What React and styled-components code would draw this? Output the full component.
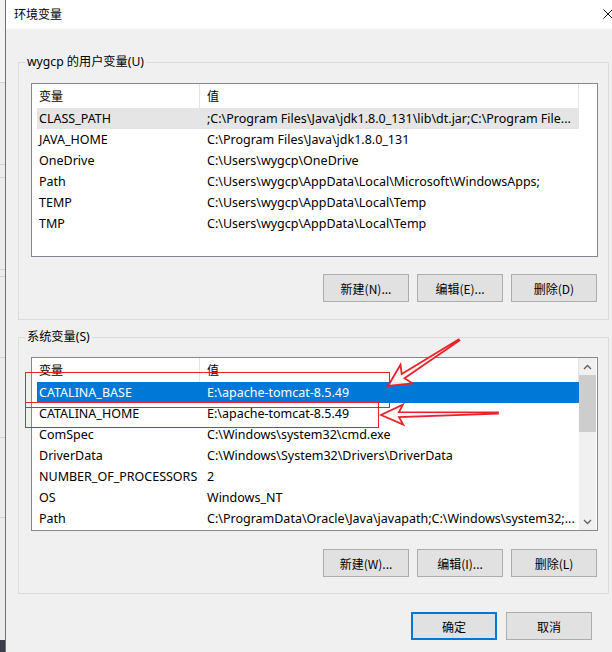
import React from 'react';
import styled, { createGlobalStyle } from 'styled-components';

const Global = createGlobalStyle`
  html, body { margin: 0; padding: 0; background: #f0f0f0; }
  body {
    font-family: "Segoe UI", "Noto Sans", "Noto Sans CJK SC", sans-serif;
    font-size: 12px;
    color: #000;
  }
  * { box-sizing: border-box; }
`;

const Screen = styled.div`
  position: relative;
  width: 612px;
  height: 652px;
  overflow: hidden;
  display: flex;
`;

const BackStrip = styled.div`
  flex: none;
  width: 5px;
  display: flex;
  flex-direction: column;
  background: #ececec;
`;

const BackSeg = styled.div`
  flex: ${(p) => (p.$grow ? 1 : 'none')};
  height: ${(p) => p.$h}px;
  background: ${(p) => p.$bg || 'transparent'};
  border-bottom: 1px solid ${(p) => p.$line || '#d4d4d4'};
`;

const Dialog = styled.div`
  flex: none;
  width: 616px;
  height: 652px;
  border-left: 1px solid #707070;
  background: #f0f0f0;
  display: flex;
  flex-direction: column;
`;

const TitleBar = styled.div`
  height: 29px;
  background: #fff;
  display: flex;
  align-items: center;
  justify-content: space-between;
  padding: 0 8px 2px 8px;
  font-family: "Noto Sans CJK SC", sans-serif;
  font-size: 12px;
`;

const Body = styled.div`
  flex: 1;
  display: flex;
  flex-direction: column;
  padding: 0 12px;
`;

const GroupBox = styled.fieldset`
  margin: ${(p) => p.$mt}px 0 0 0;
  padding: ${(p) => p.$pt}px 10px ${(p) => p.$pb}px 12px;
  border: 1px solid #dcdcdc;
  min-width: 0;
  display: flex;
  flex-direction: column;
  gap: ${(p) => p.$gap}px;
`;

const Legend = styled.legend`
  margin-left: -6px;
  padding: 0 2px;
  line-height: 16px;
  font-family: "Segoe UI", "Noto Sans", "Noto Sans CJK SC", sans-serif;
  font-size: 12.2px;
  color: #000;
`;

const ListView = styled.div`
  height: 174px;
  border: 1px solid #828790;
  background: #fff;
  display: flex;
`;

const ListBody = styled.div`
  flex: none;
  width: 547px;
  padding-left: 5px;
  display: flex;
  flex-direction: column;
  overflow: hidden;
`;

const HeaderRow = styled.div`
  height: 24px;
  display: grid;
  grid-template-columns: 163px 379px;
  flex: none;
`;

const HeaderCell = styled.div`
  display: flex;
  align-items: center;
  padding-left: ${(p) => (p.$first ? 2 : 7)}px;
  padding-bottom: 1px;
  border-right: 1px solid #e5e5e5;
  font-family: "Noto Sans CJK SC", sans-serif;
  font-size: 12px;
`;

const Row = styled.div`
  height: 21px;
  flex: none;
  display: grid;
  grid-template-columns: 163px 379px;
  align-items: center;
  background: ${(p) =>
    p.$sel === 'blue' ? '#0078d7' : p.$sel === 'gray' ? '#e5e5e5' : 'transparent'};
  color: ${(p) => (p.$sel === 'blue' ? '#fff' : '#000')};
`;

const Cell = styled.div`
  padding-left: ${(p) => (p.$first ? 2 : 7)}px;
  white-space: nowrap;
  overflow: hidden;
  line-height: 21px;
  font-size: 12.5px;
`;

const ScrollBar = styled.div`
  flex: none;
  width: 17px;
  margin-left: auto;
  margin-right: 1px;
  background: #f0f0f0;
  display: flex;
  flex-direction: column;
`;

const ScrollArrow = styled.div`
  height: 17px;
  flex: none;
  display: flex;
  align-items: center;
  justify-content: center;
`;

const ScrollThumb = styled.div`
  height: 57px;
  flex: none;
  background: #cdcdcd;
`;

const ScrollTrack = styled.div`
  flex: 1;
`;

const ButtonRow = styled.div`
  display: flex;
  justify-content: flex-end;
  gap: ${(p) => p.$gap || 8}px;
  padding-right: ${(p) => p.$pr || 0}px;
`;

const Button = styled.div`
  width: 86px;
  height: 28px;
  display: flex;
  align-items: center;
  justify-content: center;
  background: #e1e1e1;
  border: ${(p) => (p.$primary ? '2px solid #0078d7' : '1px solid #adadad')};
  font-family: "Noto Sans CJK SC", sans-serif;
  font-size: 12px;
  color: #000;
`;

const Footer = styled(ButtonRow)`
  margin-top: 18px;
`;

const Overlay = styled.svg`
  position: absolute;
  left: 0;
  top: 0;
  width: 612px;
  height: 652px;
  pointer-events: none;
`;

const userVars = [
  ['CLASS_PATH', String.raw`;C:\Program Files\Java\jdk1.8.0_131\lib\dt.jar;C:\Program File...`, 'gray'],
  ['JAVA_HOME', String.raw`C:\Program Files\Java\jdk1.8.0_131`],
  ['OneDrive', String.raw`C:\Users\wygcp\OneDrive`],
  ['Path', String.raw`C:\Users\wygcp\AppData\Local\Microsoft\WindowsApps;`],
  ['TEMP', String.raw`C:\Users\wygcp\AppData\Local\Temp`],
  ['TMP', String.raw`C:\Users\wygcp\AppData\Local\Temp`],
];

const sysVars = [
  ['CATALINA_BASE', String.raw`E:\apache-tomcat-8.5.49`, 'blue'],
  ['CATALINA_HOME', String.raw`E:\apache-tomcat-8.5.49`],
  ['ComSpec', String.raw`C:\Windows\system32\cmd.exe`],
  ['DriverData', String.raw`C:\Windows\System32\Drivers\DriverData`],
  ['NUMBER_OF_PROCESSORS', '2'],
  ['OS', 'Windows_NT'],
  ['Path', String.raw`C:\ProgramData\Oracle\Java\javapath;C:\Windows\system32;...`],
];

const Chevron = ({ up }) => (
  <svg width="9" height="6" viewBox="0 0 9 6">
    <polyline
      points={up ? '1,5 4.5,1.5 8,5' : '1,1 4.5,4.5 8,1'}
      fill="none"
      stroke="#606060"
      strokeWidth="1.3"
    />
  </svg>
);

function VarList({ rows, scroll }) {
  return (
    <ListView>
      <ListBody>
        <HeaderRow>
          <HeaderCell $first>变量</HeaderCell>
          <HeaderCell>值</HeaderCell>
        </HeaderRow>
        {rows.map(([k, v, sel]) => (
          <Row key={k} $sel={sel}>
            <Cell $first>{k}</Cell>
            <Cell>{v}</Cell>
          </Row>
        ))}
      </ListBody>
      {scroll && (
        <ScrollBar>
          <ScrollArrow>
            <Chevron up />
          </ScrollArrow>
          <ScrollThumb />
          <ScrollTrack />
          <ScrollArrow>
            <Chevron />
          </ScrollArrow>
        </ScrollBar>
      )}
    </ListView>
  );
}

function arrowPoints(tip, tail, headLen, headW, neckW, tailW) {
  const dx = tail[0] - tip[0];
  const dy = tail[1] - tip[1];
  const L = Math.hypot(dx, dy);
  const ux = dx / L;
  const uy = dy / L;
  const px = -uy;
  const py = ux;
  const P = (a, b) => `${(tip[0] + ux * a + px * b).toFixed(1)},${(tip[1] + uy * a + py * b).toFixed(1)}`;
  return [
    P(0, 0),
    P(headLen, headW),
    P(headLen - 4, neckW),
    P(L, tailW),
    P(L, -tailW),
    P(headLen - 4, -neckW),
    P(headLen, -headW),
  ].join(' ');
}

const RED = '#e8232b';

export default function App() {
  return (
    <>
      <Global />
      <Screen>
        <BackStrip>
          <BackSeg $h={83} $bg="#f3f3f3" />
          <BackSeg $h={82} />
          <BackSeg $h={13} />
          <BackSeg $h={92} />
          <BackSeg $h={7} />
          <BackSeg $h={81} />
          <BackSeg $h={80} />
          <BackSeg $h={80} />
          <BackSeg $h={120} $grow $line="transparent" />
          <BackSeg $h={12} $bg="#3b3d4a" $line="transparent" />
        </BackStrip>
        <Dialog>
          <TitleBar>
            <span>环境变量</span>
            <svg width="10" height="10" viewBox="0 0 10 10">
              <path d="M0.5 0.5 L9.5 9.5 M9.5 0.5 L0.5 9.5" stroke="#111" strokeWidth="1" />
            </svg>
          </TitleBar>
          <Body>
            <GroupBox $mt={25} $pt={13} $pb={17} $gap={17}>
              <Legend>wygcp 的用户变量(U)</Legend>
              <VarList rows={userVars} />
              <ButtonRow $pr={1}>
                <Button>新建(N)...</Button>
                <Button>编辑(E)...</Button>
                <Button>删除(D)</Button>
              </ButtonRow>
            </GroupBox>
            <GroupBox $mt={9} $pt={12} $pb={16} $gap={18}>
              <Legend>系统变量(S)</Legend>
              <VarList rows={sysVars} scroll />
              <ButtonRow $pr={1}>
                <Button>新建(W)...</Button>
                <Button>编辑(I)...</Button>
                <Button>删除(L)</Button>
              </ButtonRow>
            </GroupBox>
            <Footer $gap={9} $pr={17}>
              <Button $primary>确定</Button>
              <Button>取消</Button>
            </Footer>
          </Body>
        </Dialog>
        <Overlay viewBox="0 0 612 652">
          <rect x="25.5" y="372.5" width="364" height="35" fill="none" stroke={RED} strokeWidth="1" />
          <rect x="25.5" y="402.5" width="353" height="25" fill="none" stroke={RED} strokeWidth="1" />
          <polygon
            points={arrowPoints([388, 386], [459, 340], 22, 11, 2.5, 0.7)}
            fill="rgba(255,245,245,0.9)"
            stroke={RED}
            strokeWidth="1.8"
            strokeLinejoin="miter"
          />
          <polygon
            points={arrowPoints([381, 415], [498, 413], 22, 10, 2.5, 0.7)}
            fill="rgba(255,245,245,0.9)"
            stroke={RED}
            strokeWidth="1.8"
            strokeLinejoin="miter"
          />
        </Overlay>
      </Screen>
    </>
  );
}
